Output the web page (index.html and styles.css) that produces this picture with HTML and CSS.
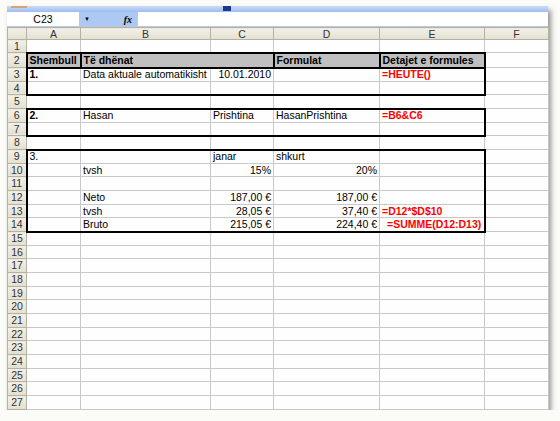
FILE: index.html
```html
<!DOCTYPE html>
<html>
<head>
<meta charset="utf-8">
<link rel="stylesheet" href="styles.css">
</head>
<body>
<div class="window">
  <div class="titlebar">
    <span class="tb-icon"></span>
    <span class="tb-btn"></span>
  </div>
  <div class="formulabar">
    <div class="namebox">C23</div>
    <div class="fbtns"><span class="arrow">&#9660;</span><span class="fx">fx</span></div>
    <div class="finput"></div>
  </div>
  <table class="sheet">
    <colgroup>
      <col class="c-rh"><col class="c-a"><col class="c-b"><col class="c-c"><col class="c-d"><col class="c-e"><col class="c-f">
    </colgroup>
    <tr class="colhead"><th class="corner"></th><th>A</th><th>B</th><th>C</th><th>D</th><th>E</th><th>F</th></tr>
    <tr class="r1"><th>1</th><td></td><td></td><td></td><td></td><td></td><td></td></tr>
    <tr class="r2"><th>2</th><td class="hd tk">Shembull</td><td class="hd tk" colspan="2">Të dhënat</td><td class="hd tk">Formulat</td><td class="hd tk">Detajet e formules</td><td></td></tr>
    <tr><th>3</th><td class="b tl">1.</td><td class="tt">Data aktuale automatikisht</td><td class="tt num">10.01.2010</td><td class="tt"></td><td class="tt tr red">=HEUTE()</td><td></td></tr>
    <tr><th>4</th><td class="bl lb"></td><td class="bb"></td><td class="bb"></td><td class="bb"></td><td class="br bb"></td><td></td></tr>
    <tr><th>5</th><td></td><td></td><td></td><td></td><td></td><td></td></tr>
    <tr><th>6</th><td class="b tl">2.</td><td class="tt">Hasan</td><td class="tt">Prishtina</td><td class="tt">HasanPrishtina</td><td class="tt tr red">=B6&amp;C6</td><td></td></tr>
    <tr><th>7</th><td class="bl lb"></td><td class="bb"></td><td class="bb"></td><td class="bb"></td><td class="br bb"></td><td></td></tr>
    <tr><th>8</th><td></td><td></td><td></td><td></td><td></td><td></td></tr>
    <tr><th>9</th><td class="tl">3.</td><td class="tt"></td><td class="tt">janar</td><td class="tt">shkurt</td><td class="tt tr"></td><td></td></tr>
    <tr><th>10</th><td class="bl"></td><td>tvsh</td><td class="num">15%</td><td class="num">20%</td><td class="br"></td><td></td></tr>
    <tr><th>11</th><td class="bl"></td><td></td><td></td><td></td><td class="br"></td><td></td></tr>
    <tr><th>12</th><td class="bl"></td><td>Neto</td><td class="num">187,00 €</td><td class="num">187,00 €</td><td class="br"></td><td></td></tr>
    <tr><th>13</th><td class="bl"></td><td>tvsh</td><td class="num">28,05 €</td><td class="num">37,40 €</td><td class="br red">=D12*$D$10</td><td></td></tr>
    <tr><th>14</th><td class="bl lb"></td><td class="bb">Bruto</td><td class="bb num">215,05 €</td><td class="bb num">224,40 €</td><td class="br bb red ind">=SUMME(D12:D13)</td><td></td></tr>
    <tr><th>15</th><td></td><td></td><td></td><td></td><td></td><td></td></tr>
    <tr><th>16</th><td></td><td></td><td></td><td></td><td></td><td></td></tr>
    <tr><th>17</th><td></td><td></td><td></td><td></td><td></td><td></td></tr>
    <tr><th>18</th><td></td><td></td><td></td><td></td><td></td><td></td></tr>
    <tr><th>19</th><td></td><td></td><td></td><td></td><td></td><td></td></tr>
    <tr><th>20</th><td></td><td></td><td></td><td></td><td></td><td></td></tr>
    <tr><th>21</th><td></td><td></td><td></td><td></td><td></td><td></td></tr>
    <tr><th>22</th><td></td><td></td><td></td><td></td><td></td><td></td></tr>
    <tr><th>23</th><td></td><td></td><td></td><td></td><td></td><td></td></tr>
    <tr><th>24</th><td></td><td></td><td></td><td></td><td></td><td></td></tr>
    <tr><th>25</th><td></td><td></td><td></td><td></td><td></td><td></td></tr>
    <tr><th>26</th><td></td><td></td><td></td><td></td><td></td><td></td></tr>
    <tr><th>27</th><td></td><td></td><td></td><td></td><td></td><td></td></tr>
  </table>
</div>
</body>
</html>
```
FILE: styles.css
```css
html, body {
  margin: 0;
  padding: 0;
  background: #fbfbf8;
}
body {
  font-family: "Liberation Sans", Arial, sans-serif;
  font-size: 10.5px;
  color: #000;
}
.window {
  margin: 6px 0 0 7px;
  width: 541px;
  background: #fff;
  box-shadow: 3px 4px 5px rgba(60, 60, 60, 0.55);
}
.titlebar {
  height: 6px;
  background: linear-gradient(#c9dbf7, #9dbdf0);
  display: flex;
  align-items: flex-start;
}
.tb-icon {
  width: 16px;
  height: 2px;
  margin-left: 4px;
  background: #d9a46a;
}
.tb-btn {
  width: 8px;
  height: 5px;
  margin-left: 196px;
  background: #1f3a8c;
}
.formulabar {
  height: 14px;
  display: flex;
  border-bottom: 1px solid #b9c9e4;
}
.namebox {
  width: 72px;
  background: #fff;
  text-align: center;
  line-height: 14px;
  font-size: 10.5px;
}
.fbtns {
  width: 59px;
  background: #aec8f4;
  display: flex;
  align-items: center;
  justify-content: space-between;
  padding: 0 6px 0 5px;
  box-sizing: border-box;
}
.arrow {
  font-size: 6px;
  color: #000;
}
.fx {
  font-family: "Liberation Serif", "Times New Roman", serif;
  font-style: italic;
  font-weight: bold;
  font-size: 10px;
}
.finput {
  flex: 1;
  background: #fff;
}
.sheet {
  border-collapse: collapse;
  table-layout: fixed;
  width: 541px;
  background: #fdfefd;
}
.c-rh { width: 19px; }
.c-a { width: 54px; }
.c-b { width: 130px; }
.c-c { width: 63px; }
.c-d { width: 106px; }
.c-e { width: 105px; }
.c-f { width: 64px; }
.sheet td, .sheet th {
  border: 1px solid #c8c8c8;
  padding: 0 2px;
  height: 13.68px;
  line-height: 11px;
  white-space: nowrap;
  overflow: visible;
  font-weight: normal;
  text-align: left;
  box-sizing: border-box;
}
.sheet th {
  background: linear-gradient(#f3f1e8, #e2dfd2);
  border-color: #b6b29f;
  color: #333;
  text-align: center;
  padding: 0;
}
.sheet .colhead th {
  height: 12px;
  line-height: 10px;
}
.sheet tr.r1 td, .sheet tr.r1 th { height: 13px; }
.sheet tr.r2 td, .sheet tr.r2 th { height: 15px; }
.sheet td.hd {
  background: #c0c0c0;
  font-weight: bold;
}
.sheet td.b { font-weight: bold; }
.sheet td.red {
  color: #ff0000;
  font-weight: bold;
}
.tk { border: 2px solid #000 !important; }
.tt { border-top: 2px solid #000 !important; }
.tl { border-top: 2px solid #000 !important; border-left: 2px solid #000 !important; }
.tr { border-top: 2px solid #000 !important; border-right: 2px solid #000 !important; }
.bl { border-left: 2px solid #000 !important; }
.br { border-right: 2px solid #000 !important; }
.bb { border-bottom: 2px solid #000 !important; }
.lb { border-left: 2px solid #000 !important; border-bottom: 2px solid #000 !important; }
.sheet td.num { text-align: right; }
.sheet td.ind { padding-left: 7px; }
```
